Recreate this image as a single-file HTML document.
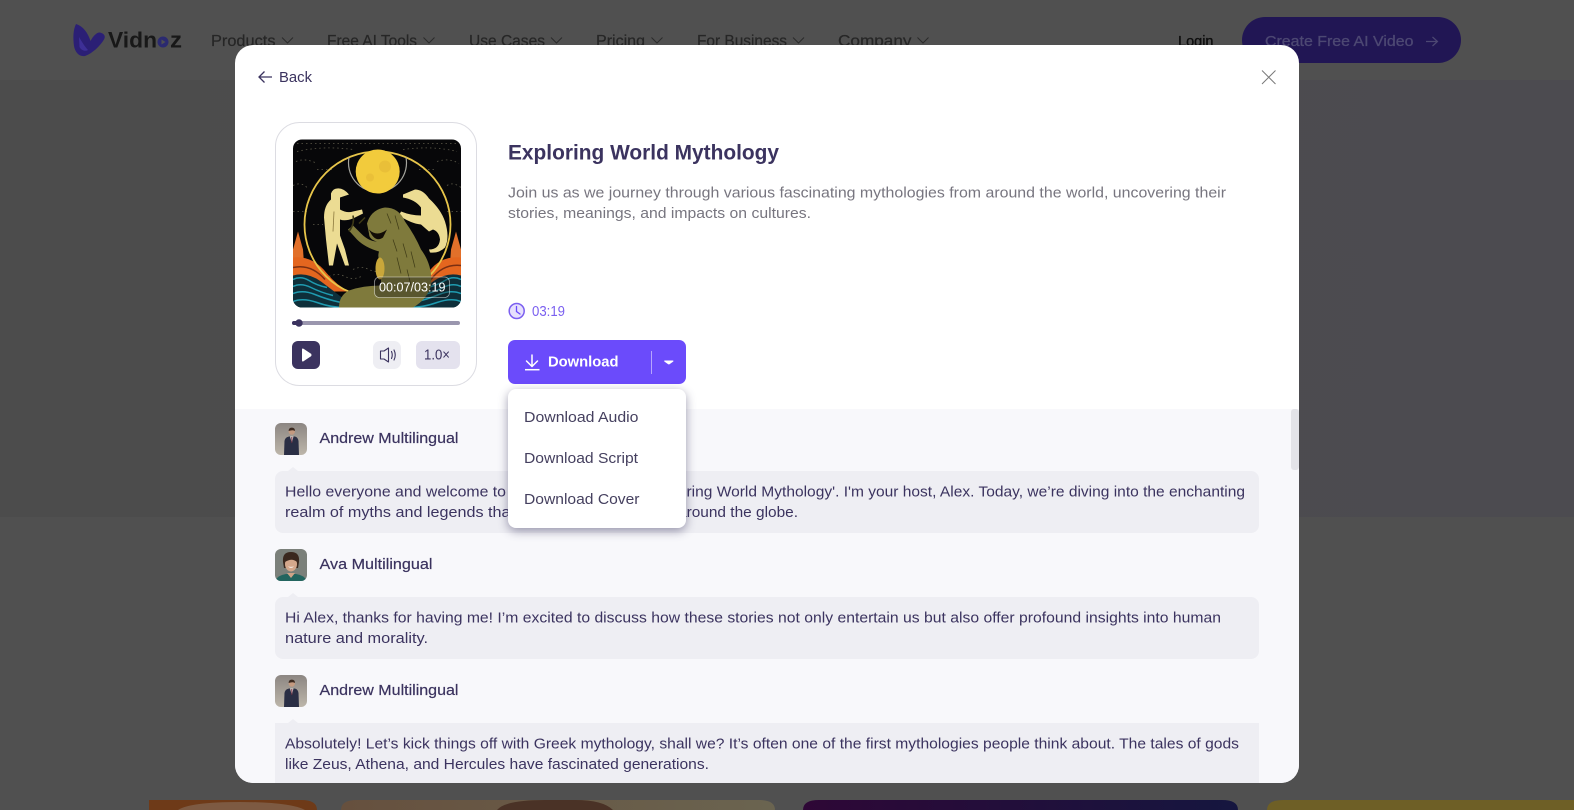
<!DOCTYPE html>
<html lang="en">
<head>
<meta charset="utf-8">
<title>Exploring World Mythology</title>
<style>
html,body{margin:0;padding:0;width:1574px;height:810px;overflow:hidden;background:#505050}
svg{display:block;overflow:hidden}
text{font-family:"Liberation Sans",sans-serif;white-space:pre}
.n{font-size:15.5px;fill:#262626;stroke:#262626;stroke-width:.2}
.b{font-size:15px;fill:#3b335f}
.m{font-size:15px;fill:#3b335f;font-weight:500;stroke:#3b335f;stroke-width:.2}
.d{font-size:15px;fill:#77757f}
.c{font-size:15px;fill:#45405f}
</style>
</head>
<body>
<svg width="1574" height="810" viewBox="0 0 1574 810" xmlns="http://www.w3.org/2000/svg">
<defs>
<linearGradient id="hero" x1="0" x2="1" y1="0" y2="0"><stop offset="0" stop-color="#4c4c4c"/><stop offset="1" stop-color="#4c4b50"/></linearGradient>
<linearGradient id="c3" x1="0" x2="1" y1="0" y2="0"><stop offset="0" stop-color="#2e0736"/><stop offset="1" stop-color="#15163f"/></linearGradient>
<linearGradient id="c2" x1="0" x2="1" y1="0" y2="0"><stop offset="0" stop-color="#66503e"/><stop offset="1" stop-color="#6a6450"/></linearGradient>
<clipPath id="modal"><rect x="235" y="45" width="1064" height="738" rx="18"/></clipPath>
<clipPath id="cover"><rect x="0" y="0" width="168" height="168" rx="9"/></clipPath>
<clipPath id="av1"><rect x="275" y="423" width="32" height="32" rx="6"/></clipPath>
<clipPath id="av2"><rect x="275" y="549" width="32" height="32" rx="6"/></clipPath>
<clipPath id="av3"><rect x="275" y="675" width="32" height="32" rx="6"/></clipPath>
<linearGradient id="avbg" x1="0" x2="0" y1="0" y2="1"><stop offset="0" stop-color="#8c8682"/><stop offset="1" stop-color="#bdb6aa"/></linearGradient>
<g id="man">
<rect x="0" y="0" width="32" height="32" fill="url(#avbg)"/>
<path d="M9 32 L9.500 18 Q10 14.500 14 13.500 L20 13.500 Q23 14.500 23.500 18 L24 32Z" fill="#2a2e44"/>
<path d="M15 13.500 L16.800 20 L18.500 13.500Z" fill="#d8d2d0"/>
<path d="M16.300 14 L17.300 14 L17.200 20 L16.500 20Z" fill="#7a3040"/>
<circle cx="16.800" cy="8.500" r="3.200" fill="#c49a80"/>
<path d="M13.600 8 Q13.700 4.500 16.800 4.600 Q20 4.500 20 8 Q18 6.500 13.600 8Z" fill="#3c2a20"/>
</g>
</defs>

<!-- page behind overlay -->
<rect x="0" y="0" width="1574" height="810" fill="#505050"/>
<rect x="0" y="80" width="1574" height="437" fill="url(#hero)"/>

<!-- nav -->
<path d="M76 24 C83 26 88 33 90.500 41 C93 36 97 32 100 32.500 C104 33.500 106 36 104 39.500 C100 46 93 53 85 56 C79 57 75 52 74 46 C73 38 73 30 76 24Z" fill="#2b1f75"/>
<path d="M79 37 C82 42 85 47 88 50 C85 52 81 50 79.500 47Z" fill="#3d2f96"/>
<text x="108" y="47.700" font-size="22" fill="#181818" font-weight="700" textLength="49" lengthAdjust="spacingAndGlyphs">Vidn</text>
<circle cx="163" cy="42" r="5.500" fill="#2b2a70"/>
<path d="M161.500 39.500 L165.500 42 L161.500 44.500Z" fill="#505050"/>
<text x="170" y="47.700" font-size="22" fill="#181818" font-weight="700" textLength="12" lengthAdjust="spacingAndGlyphs">z</text>

<g fill="none" stroke="#2b2b2b" stroke-width="1">
<path d="M282 37.500 L287.500 43 L293 37.500"/>
<path d="M423.500 37.500 L429 43 L434.500 37.500"/>
<path d="M551 37.500 L556.500 43 L562 37.500"/>
<path d="M651.500 37.500 L657 43 L662.500 37.500"/>
<path d="M793 37.500 L798.500 43 L804 37.500"/>
<path d="M917.500 37.500 L923 43 L928.500 37.500"/>
</g>
<text class="n" x="211" y="46" textLength="64.500" lengthAdjust="spacingAndGlyphs">Products</text>
<text class="n" x="327" y="46" textLength="90" lengthAdjust="spacingAndGlyphs">Free AI Tools</text>
<text class="n" x="469" y="46" textLength="76" lengthAdjust="spacingAndGlyphs">Use Cases</text>
<text class="n" x="596" y="46" textLength="49" lengthAdjust="spacingAndGlyphs">Pricing</text>
<text class="n" x="697" y="46" textLength="90" lengthAdjust="spacingAndGlyphs">For Business</text>
<text class="n" x="838" y="46" textLength="73.500" lengthAdjust="spacingAndGlyphs">Company</text>
<text x="1178" y="46" font-size="15" font-weight="500" fill="#0e0e0e" stroke="#0e0e0e" stroke-width=".35" textLength="35.500" lengthAdjust="spacingAndGlyphs">Login</text>
<rect x="1242" y="17" width="219" height="46" rx="23" fill="#211654"/>
<text x="1265" y="46" font-size="15" font-weight="500" fill="#4d4873" stroke="#4d4873" stroke-width=".3" textLength="148.500" lengthAdjust="spacingAndGlyphs">Create Free AI Video</text>
<path d="M1426 41.500 H1437 M1432.500 37 L1437.500 41.500 L1432.500 46" fill="none" stroke="#4d4873" stroke-width="1.200"/>

<!-- bottom cards -->
<path d="M149 810 V800 H301 Q317 800 317 810Z" fill="#6e3a18"/>
<path d="M178 810 Q190 802 240 802 Q290 802 305 810Z" fill="#7d5a42"/>
<path d="M341 810 Q341 800 357 800 H759 Q775 800 775 810Z" fill="url(#c2)"/>
<path d="M497 810 Q505 800 545 800 H575 Q603 800 613 810Z" fill="#4a3226"/>
<path d="M803 810 Q803 800 819 800 H1222 Q1238 800 1238 810Z" fill="url(#c3)"/>
<path d="M1267 810 Q1267 800 1283 800 H1574 V810Z" fill="#6e5f26"/>

<!-- modal -->
<rect x="235" y="45" width="1064" height="738" rx="18" fill="#fff"/>
<g clip-path="url(#modal)">
<rect x="235" y="409" width="1064" height="374" fill="#f8f8fb"/>
<rect x="1291" y="409" width="8" height="61" rx="3" fill="#e3e3e8"/>

<!-- message 1 -->
<g clip-path="url(#av1)"><use href="#man" x="275" y="423"/></g>
<text class="m" x="319.500" y="443" textLength="139" lengthAdjust="spacingAndGlyphs">Andrew Multilingual</text>
<path d="M288 471 L293 467 L298 471Z" fill="#eeeef3"/>
<rect x="275" y="471" width="984" height="62" rx="8" fill="#eeeef3"/>
<text class="b" x="285" y="496.500" textLength="221" lengthAdjust="spacingAndGlyphs">Hello everyone and welcome to</text>
<text class="b" x="686.500" y="496.500" textLength="558.500" lengthAdjust="spacingAndGlyphs">ring World Mythology'. I'm your host, Alex. Today, we’re diving into the enchanting</text>
<text class="b" x="285" y="517" textLength="230" lengthAdjust="spacingAndGlyphs">realm of myths and legends that</text>
<text class="b" x="678" y="517" textLength="120" lengthAdjust="spacingAndGlyphs">around the globe.</text>

<!-- message 2 -->
<g clip-path="url(#av2)">
<rect x="275" y="549" width="32" height="32" fill="#7b807a"/>
<path d="M283 562 Q282 552 291 552 Q300 552 299 562 L298 568 L284 568Z" fill="#3a281e"/>
<ellipse cx="291" cy="564" rx="6" ry="7.500" fill="#d4a88c"/>
<path d="M285 562 Q286 555 291 555 Q296 555 297 562 Q292 557.500 285 562Z" fill="#3a281e"/>
<path d="M288 566.500 q3 2.500 6 0 q-3 .8 -6 0Z" fill="#fff"/>
<path d="M275 581 Q278 575 286 574 L296 574 Q304 575 307 581Z" fill="#23655f"/>
<path d="M287 573 L291 578 L295 573Z" fill="#cfa488"/>
</g>
<text class="m" x="319.500" y="569" textLength="113" lengthAdjust="spacingAndGlyphs">Ava Multilingual</text>
<path d="M288 597 L293 593 L298 597Z" fill="#eeeef3"/>
<rect x="275" y="597" width="984" height="62" rx="8" fill="#eeeef3"/>
<text class="b" x="285" y="622.500" textLength="936" lengthAdjust="spacingAndGlyphs">Hi Alex, thanks for having me! I’m excited to discuss how these stories not only entertain us but also offer profound insights into human</text>
<text class="b" x="285" y="643" textLength="143" lengthAdjust="spacingAndGlyphs">nature and morality.</text>

<!-- message 3 -->
<g clip-path="url(#av3)"><use href="#man" x="275" y="675"/></g>
<text class="m" x="319.500" y="695" textLength="139" lengthAdjust="spacingAndGlyphs">Andrew Multilingual</text>
<path d="M288 723 L293 719 L298 723Z" fill="#eeeef3"/>
<rect x="275" y="723" width="984" height="60" fill="#eeeef3"/>
<text class="b" x="285" y="748.500" textLength="954" lengthAdjust="spacingAndGlyphs">Absolutely! Let’s kick things off with Greek mythology, shall we? It’s often one of the first mythologies people think about. The tales of gods</text>
<text class="b" x="285" y="769" textLength="424" lengthAdjust="spacingAndGlyphs">like Zeus, Athena, and Hercules have fascinated generations.</text>
</g>

<!-- back / close -->
<path d="M272 77 H259 M264.500 71.500 L259 77 L264.500 82.500" fill="none" stroke="#3b335f" stroke-width="1.300"/>
<text x="279" y="82" font-size="15" fill="#3b335f" textLength="33" lengthAdjust="spacingAndGlyphs">Back</text>
<path d="M1262 70.500 L1275.500 84 M1275.500 70.500 L1262 84" fill="none" stroke="#7a7a7a" stroke-width="1"/>

<!-- player card -->
<rect x="275.500" y="122.500" width="201" height="263" rx="24" fill="#fff" stroke="#dcdce2"/>
<g transform="translate(293,139.500)">
<g clip-path="url(#cover)">
<rect width="168" height="168" fill="#070709"/>
<g stroke="#5d5a4a" stroke-width=".8" stroke-dasharray="1.500 3" fill="none">
<path d="M4 4 H164"/><path d="M4 12 Q30 6 60 10"/><path d="M110 10 Q140 6 164 12"/>
<path d="M3 22 Q12 18 24 24"/><path d="M144 22 Q156 18 166 24"/>
<path d="M0 46 Q8 42 14 48"/><path d="M154 46 Q160 42 168 48"/>
<path d="M0 72 H14"/><path d="M154 72 H168"/>
<path d="M24 30 H40"/><path d="M126 30 H142"/>
<path d="M20 85 H30"/><path d="M138 85 H150"/>
<path d="M60 130 Q68 126 76 130 Q84 134 92 130"/>
<path d="M36 137 Q44 133 52 137 Q60 141 68 137"/>
</g>
<path d="M0 110 L5 92 L10 110 L11 124 L0 124Z" fill="#e2702a"/>
<path d="M168 110 L163 92 L158 110 L157 124 L168 124Z" fill="#e2702a"/>
<path d="M0 118 Q20 116 34 134 Q44 146 56 152 L0 152Z" fill="#e4661f"/>
<path d="M168 118 Q148 116 136 132 Q128 146 116 152 L168 152Z" fill="#e4661f"/>
<path d="M0 128 Q18 124 32 140" fill="none" stroke="#7a2f12" stroke-width="1.500"/>
<path d="M168 126 Q150 124 138 140" fill="none" stroke="#7a2f12" stroke-width="1.500"/>
<circle cx="84.500" cy="85" r="73" fill="none" stroke="#e7c54a" stroke-width="1.800"/>
<path d="M0 136 Q14 132 28 142 Q44 154 62 168 L0 168Z" fill="#0e2f3a"/>
<path d="M168 136 Q154 132 140 142 Q124 154 106 168 L168 168Z" fill="#0e2f3a"/>
<g fill="none" stroke="#1f9bb0" stroke-width="1.500">
<path d="M0 140 Q8 136 16 141 T34 148"/>
<path d="M0 147 Q8 143 18 148 T40 156"/>
<path d="M0 154 Q10 150 22 155 T48 163"/>
<path d="M0 162 Q10 158 24 163 T52 168"/>
<path d="M168 140 Q160 136 152 141 T134 148"/>
<path d="M168 147 Q160 143 150 148 T128 156"/>
<path d="M168 154 Q158 150 146 155 T120 163"/>
<path d="M168 162 Q158 158 144 163 T116 168"/>
</g>
<path d="M56 18 A29 29 0 1 0 113 18" fill="none" stroke="#a5a59e" stroke-width="1.200"/>
<circle cx="84.700" cy="32" r="22" fill="#f2cb3c"/>
<circle cx="92" cy="27" r="6" fill="#e5b936" opacity=".7"/>
<circle cx="77" cy="38" r="4" fill="#e5b936" opacity=".6"/>
<!-- left figure -->
<path d="M44 49 Q50 48 56 55 L47 58 L47 70 Q54 74 60 72 L69 70 L70 74 L60 79 Q52 82 47 80 L47 96 L52 110 L56 126 L52 126 L44 104 L40 126 L36 126 L33 100 L31 78 Q31 66 38 60 L38 54 Q40 49 44 49Z" fill="#ecdc93"/>
<path d="M41 72 L40 92" stroke="#8d7a3e" stroke-width=".8" fill="none"/>
<!-- right figure -->
<path d="M110 55 L122 50 Q130 50 136 59 Q148 70 152 82 Q157 98 152 108 Q146 114 137 113 L136 110 Q146 110 147 100 Q146 92 140 90 L136 92 L128 85 Q118 84 106 76 L108 72 Q118 76 128 76 L128 68 Q122 60 110 58Z" fill="#ecdc93"/>
<!-- monster -->
<path d="M74 84 Q78 70 92 68 Q106 68 112 82 Q122 96 128 110 Q140 126 138 146 Q134 160 120 168 L46 168 Q46 156 56 151 Q70 146 88 146 L88 126 Q84 118 86 112 Q72 108 64 100 L55 90 L60 86 L68 94 Q76 102 84 102 Q76 100 76 94 L74 84Z" fill="#7f7a3c"/>
<path d="M76 90 Q84 98 94 90 L90 98 Q82 104 76 90Z" fill="#120c06"/>
<ellipse cx="87" cy="129" rx="4.500" ry="11" fill="#c9a73a"/>
<g stroke="#3e3a16" stroke-width=".7" fill="none">
<path d="M100 100 L104 112"/><path d="M110 104 L114 118"/><path d="M118 112 L122 128"/><path d="M104 118 L108 134"/><path d="M114 130 L118 146"/><path d="M94 74 L98 84"/><path d="M102 76 L106 90"/>
</g>
<path d="M60 76 Q62 84 56 92 M66 84 L72 78" stroke="#3e3a16" stroke-width="1.500" fill="none"/>
<rect x="81.500" y="137.500" width="75" height="20.500" rx="5" fill="rgba(20,20,20,.35)" stroke="rgba(255,255,255,.55)" stroke-width=".8"/>
<text x="86" y="152" font-size="12.500" fill="#fff" textLength="66.500" lengthAdjust="spacingAndGlyphs">00:07/03:19</text>
</g>
</g>
<!-- progress -->
<rect x="292" y="321" width="168" height="4" rx="2" fill="#9a96ae"/>
<rect x="292" y="321" width="7" height="4" rx="2" fill="#3b335f"/>
<circle cx="299" cy="323" r="3.700" fill="#3b335f"/>
<!-- controls -->
<rect x="292" y="341" width="28" height="28" rx="6" fill="#3b335f"/>
<path d="M302 349.500 Q302 348 303.500 348.800 L311 353.700 Q312 355 311 356.300 L303.500 361.200 Q302 362 302 360.500Z" fill="#fff"/>
<rect x="373" y="341" width="28" height="28" rx="7" fill="#eeeef3"/>
<path d="M380.500 351 H384 L388.500 348 V362 L384 359 H380.500Z M391.500 351.500 Q393 355 391.500 358.500 M394 350 Q396.500 355 394 360" fill="none" stroke="#3b335f" stroke-width="1.100" stroke-linejoin="round" stroke-linecap="round"/>
<rect x="416" y="341" width="44" height="28" rx="6" fill="#e4e2ee"/>
<text x="424" y="359.500" font-size="14.500" fill="#3b335f" textLength="26" lengthAdjust="spacingAndGlyphs">1.0×</text>

<!-- info -->
<text x="508" y="159.500" font-size="21" font-weight="700" fill="#3b335f" textLength="271" lengthAdjust="spacingAndGlyphs">Exploring World Mythology</text>
<text class="d" x="508" y="197.500" textLength="718" lengthAdjust="spacingAndGlyphs">Join us as we journey through various fascinating mythologies from around the world, uncovering their</text>
<text class="d" x="508" y="218" textLength="303" lengthAdjust="spacingAndGlyphs">stories, meanings, and impacts on cultures.</text>

<circle cx="516.700" cy="311" r="7.500" fill="#e6e0fd" stroke="#7b5ff0" stroke-width="1.500"/>
<path d="M516.500 306.500 V311.500 L520 314" fill="none" stroke="#6b4bfb" stroke-width="1.300" stroke-linecap="round"/>
<text x="532" y="316" font-size="14.500" fill="#7b60f0" textLength="33" lengthAdjust="spacingAndGlyphs">03:19</text>

<!-- download button -->
<rect x="508" y="340" width="178" height="44" rx="7" fill="#6b4bfb"/>
<path d="M532 355 V366 M526.500 361 L532 366.500 L537.500 361" fill="none" stroke="#fff" stroke-width="1.500" stroke-linecap="round" stroke-linejoin="round"/>
<path d="M525 369.700 H539.500" stroke="#fff" stroke-width="1.500"/>
<text x="548" y="366.500" font-size="15" font-weight="700" fill="#fff" textLength="70.500" lengthAdjust="spacingAndGlyphs">Download</text>
<path d="M651.500 351 V374" stroke="#b6a5fd" stroke-width="1"/>
<path d="M664.500 360.500 H673 Q673.800 360.800 673.300 361.500 L669.500 364.200 Q668.800 364.600 668.200 364.200 L664.300 361.500 Q663.900 360.800 664.500 360.500Z" fill="#fff"/>

<!-- dropdown -->
<rect x="508" y="389" width="178" height="139" rx="8" fill="#fff" style="filter:drop-shadow(0 3px 5px rgba(40,35,80,.45))"/>
<text class="c" x="524" y="422" textLength="114.500" lengthAdjust="spacingAndGlyphs">Download Audio</text>
<text class="c" x="524" y="463" textLength="114" lengthAdjust="spacingAndGlyphs">Download Script</text>
<text class="c" x="524" y="504" textLength="115.500" lengthAdjust="spacingAndGlyphs">Download Cover</text>
</svg>
</body>
</html>
